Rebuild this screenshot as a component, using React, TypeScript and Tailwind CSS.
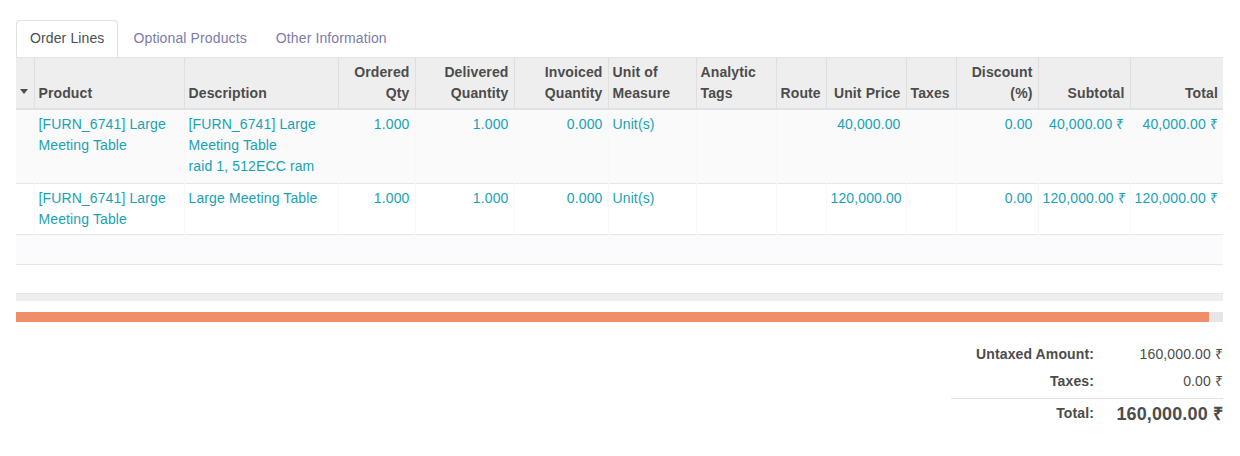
import React from "react";

const cols = [18, 150, 154, 77, 99, 94, 88, 80, 50, 80, 50, 82, 92, 93];

const lines = [
  {
    product: ["[FURN_6741] Large", "Meeting Table"],
    description: ["[FURN_6741] Large", "Meeting Table", "raid 1, 512ECC ram"],
    ordered: "1.000",
    delivered: "1.000",
    invoiced: "0.000",
    uom: "Unit(s)",
    price: "40,000.00",
    discount: "0.00",
    subtotal: "40,000.00 ₹",
    total: "40,000.00 ₹",
  },
  {
    product: ["[FURN_6741] Large", "Meeting Table"],
    description: ["Large Meeting Table"],
    ordered: "1.000",
    delivered: "1.000",
    invoiced: "0.000",
    uom: "Unit(s)",
    price: "120,000.00",
    discount: "0.00",
    subtotal: "120,000.00 ₹",
    total: "120,000.00 ₹",
  },
];

const th = "pl-[4px] pr-[5px] py-[4px] align-bottom font-bold border-r border-[#dfdfdf] last:border-r-0";
const td = "pl-[4px] pr-[5px] pt-[4px] align-top whitespace-nowrap border-r border-[#f8f8f8] last:border-r-0";

export default function App() {
  return (
    <div className="min-h-screen bg-white px-4 pt-5 text-[14px] leading-[21px] tracking-[0.12px] text-[#4c4c4c]" style={{ fontFamily: '"Liberation Sans", Arial, sans-serif' }}>
      {/* Tabs */}
      <div className="flex">
        <div className="px-[13px] py-[7px] border border-b-0 border-[#dee2e6] rounded-t-[4px] text-[#495057] bg-white">Order Lines</div>
        <div className="px-[13px] py-[7px] border border-transparent text-[#7c7bad] ml-[1px]">Optional Products</div>
        <div className="px-[13px] py-[7px] border border-transparent text-[#7c7bad] ml-[1px]">Other Information</div>
      </div>

      {/* Order lines */}
      <table className="table-fixed border-collapse w-[1207px]">
        <colgroup>
          {cols.map((w, i) => (
            <col key={i} style={{ width: w }} />
          ))}
        </colgroup>
        <thead>
          <tr className="bg-[#eeeeee] border-t border-[#e4e4e4] border-b-2 border-b-[#dee2e6]">
            <th className={th + " text-center"}>
              <span className="inline-block mb-[4px] w-0 h-0 border-l-[4px] border-r-[4px] border-t-[5px] border-l-transparent border-r-transparent border-t-[#4c4c4c]" />
            </th>
            <th className={th + " text-left"}>Product</th>
            <th className={th + " text-left"}>Description</th>
            <th className={th + " text-right"}>Ordered<br />Qty</th>
            <th className={th + " text-right"}>Delivered<br />Quantity</th>
            <th className={th + " text-right"}>Invoiced<br />Quantity</th>
            <th className={th + " text-left"}>Unit of<br />Measure</th>
            <th className={th + " text-left"}>Analytic<br />Tags</th>
            <th className={th + " text-left"}>Route</th>
            <th className={th + " text-right"}>Unit Price</th>
            <th className={th + " text-left"}>Taxes</th>
            <th className={th + " text-right"}>Discount<br />(%)</th>
            <th className={th + " text-right"}>Subtotal</th>
            <th className={th + " text-right"}>Total</th>
          </tr>
        </thead>
        <tbody className="text-[#17a2b8]">
          {lines.map((l, i) => {
            const cell = td + (i === 0 ? " pb-[6px]" : " pb-[4px]");
            return (
              <tr key={i} className={(i % 2 === 0 ? "bg-[#fafafa]" : "bg-white") + " border-b border-[#e6e6ea]"}>
                <td className={cell}></td>
                <td className={cell}>{l.product.map((p) => <div key={p}>{p}</div>)}</td>
                <td className={cell}>{l.description.map((p) => <div key={p}>{p}</div>)}</td>
                <td className={cell + " text-right"}>{l.ordered}</td>
                <td className={cell + " text-right"}>{l.delivered}</td>
                <td className={cell + " text-right"}>{l.invoiced}</td>
                <td className={cell}>{l.uom}</td>
                <td className={cell}></td>
                <td className={cell}></td>
                <td className={cell + " text-right"}>{l.price}</td>
                <td className={cell}></td>
                <td className={cell + " text-right"}>{l.discount}</td>
                <td className={cell + " text-right"}>{l.subtotal}</td>
                <td className={cell + " text-right"}>{l.total}</td>
              </tr>
            );
          })}
          <tr className="bg-[#fbfafc] border-b border-[#e6e6ea]">
            <td colSpan={14} className="h-[30px]"></td>
          </tr>
          <tr className="bg-white border-b border-[#e6e6ea]">
            <td colSpan={14} className="h-[29px]"></td>
          </tr>
        </tbody>
        <tfoot>
          <tr className="bg-[#eeeeee]">
            <td colSpan={14} className="h-[7px]"></td>
          </tr>
        </tfoot>
      </table>

      {/* scroll bar */}
      <div className="mt-[11px] w-[1207px] h-[10px] bg-[#e6e6e6]">
        <div className="h-full w-[1193px] bg-[#ef8f69]" />
      </div>

      {/* Totals */}
      <div className="flex justify-end w-[1207px] mt-[22px]">
        <table className="border-collapse w-[272px]">
          <tbody>
            <tr>
              <td className="text-right font-bold pb-[6px] whitespace-nowrap">Untaxed Amount:</td>
              <td className="w-[129px] text-right pb-[6px] whitespace-nowrap">160,000.00 ₹</td>
            </tr>
            <tr>
              <td className="text-right font-bold pb-[6px]">Taxes:</td>
              <td className="text-right pb-[6px]">0.00 ₹</td>
            </tr>
            <tr className="border-t border-[#dee2e6]">
              <td className="text-right font-bold pt-[3px]">Total:</td>
              <td className="text-right font-bold text-[18px] leading-[24px] pt-[3px] whitespace-nowrap">160,000.00 ₹</td>
            </tr>
          </tbody>
        </table>
      </div>
    </div>
  );
}
